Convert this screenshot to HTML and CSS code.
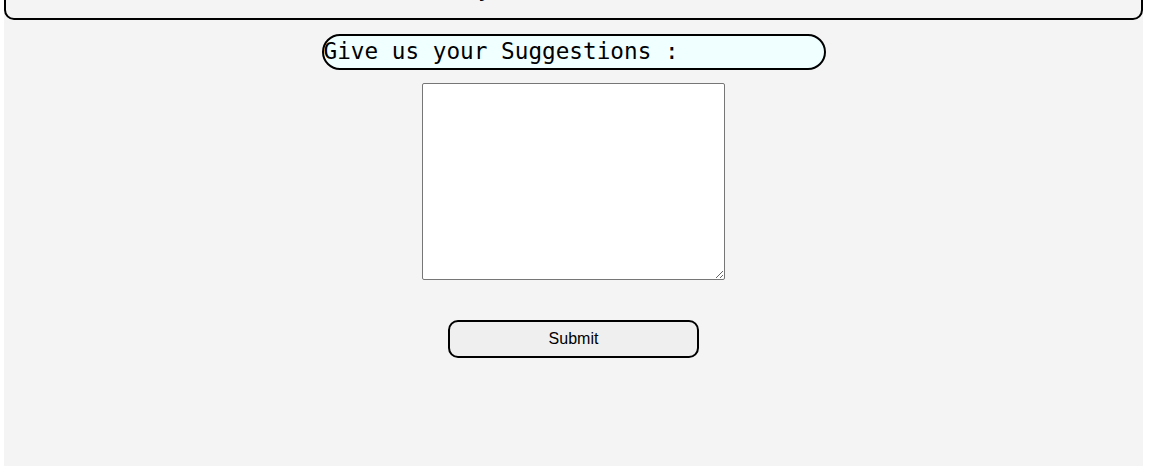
FILE: index.html
```html
<!DOCTYPE html>
<html lang="en">
<head>
<meta charset="utf-8">
<title>Suggestions</title>
<link rel="stylesheet" href="styles.css">
</head>
<body>
<div class="page">
  <div class="top-box">
    <p class="top-text">Thank you. Come back soon!</p>
  </div>
  <form class="suggest-form">
    <label class="suggest-label" for="suggest">Give us your Suggestions :</label>
    <textarea class="suggest-text" id="suggest"></textarea>
    <button class="submit-btn" type="button">Submit</button>
  </form>
</div>
</body>
</html>
```

FILE: styles.css
```css
html, body {
  margin: 0;
  padding: 0;
  background: #ffffff;
  overflow: hidden;
}

.page {
  margin-left: 4px;
  width: 1139px;
  min-height: 466px;
  background: #f4f4f4;
  display: flex;
  flex-direction: column;
  align-items: center;
}

.top-box {
  align-self: stretch;
  box-sizing: border-box;
  margin-top: -60px;
  height: 80px;
  border: 2px solid #000;
  border-radius: 10px;
  padding: 32px 0 16px;
}

.top-text {
  margin: 0;
  text-align: center;
  font-family: "DejaVu Sans Mono", monospace;
  font-size: 22.7px;
  line-height: 28px;
  color: #000;
}

.suggest-form {
  align-self: stretch;
  display: flex;
  flex-direction: column;
  align-items: center;
}

.suggest-label {
  box-sizing: border-box;
  margin-top: 14px;
  width: 504px;
  height: 36px;
  border: 2px solid #000;
  border-radius: 18px;
  background: #f0ffff;
  font-family: "DejaVu Sans Mono", monospace;
  font-size: 22.7px;
  line-height: 31px;
  color: #000;
  white-space: pre;
}

.suggest-text {
  box-sizing: border-box;
  margin: 13px 0 0;
  width: 303px;
  height: 197px;
  border: 1px solid #767676;
  border-radius: 2px;
  background: #fff;
  padding: 2px;
}

.submit-btn {
  box-sizing: border-box;
  margin-top: 40px;
  width: 251px;
  height: 38px;
  border: 2px solid #000;
  border-radius: 10px;
  background: #efefef;
  font-family: "Liberation Sans", Arial, sans-serif;
  font-size: 16px;
  color: #000;
  padding: 0;
}
```
